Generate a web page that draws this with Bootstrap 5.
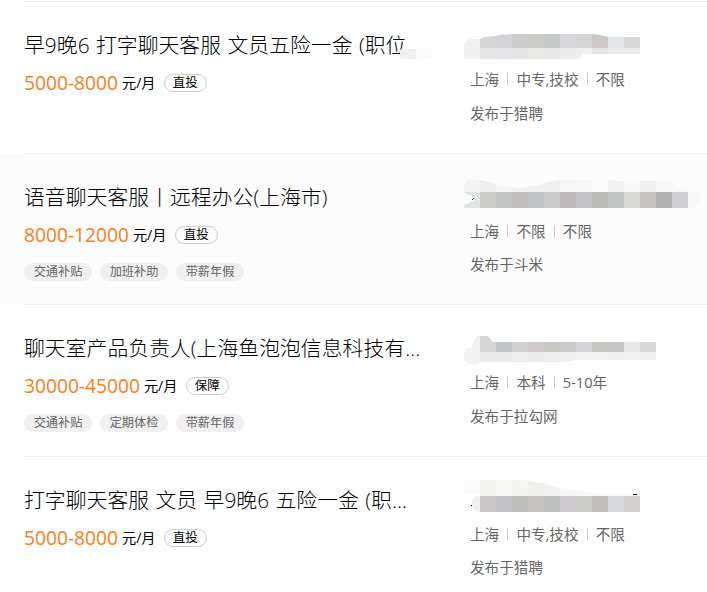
<!DOCTYPE html>
<html lang="zh-CN">
<head>
    <meta charset="utf-8">
    <meta name="viewport" content="width=device-width, initial-scale=1">
    <title>职位列表</title>
    <link rel="stylesheet" href="https://cdn.jsdelivr.net/npm/bootstrap@5.3.0/dist/css/bootstrap.min.css">
    <style>
        body
        {
            font-family: "Open Sans", "Noto Sans CJK SC", sans-serif;
            color: #000;
            background-color: #fff;
            overflow: hidden;
        }

        .job-list
        {
            padding-top: 0.3px;
        }

        .job-top
        {
            box-sizing: content-box;
            height: 0;
            margin-left: 24px;
            padding-top: 1px;
            border-bottom: 1px solid #eee;
        }

        .job-item
        {
            height: 151.5px;
            padding-left: 24px;
        }

        .job-item.active-row
        {
            background-color: #fcfcfc;
        }

        .job-inner
        {
            border-bottom: 1px solid #eee;
        }

        .job-main
        {
            width: 440px;
            padding-top: 28px;
        }

        .job-title
        {
            font-size: 20.8px;
            font-weight: 300;
            line-height: 30px;
            letter-spacing: 0.06px;
            word-spacing: 0.9px;
        }

        .title-smudge
        {
            left: 376px;
            top: 18px;
        }

        .job-pay
        {
            height: 18px;
            margin-top: 14px;
            line-height: 18px;
        }

        .pay-num
        {
            font-size: 19.2px;
            color: #ff7d18;
        }

        .pay-unit
        {
            font-size: 14.2px;
            margin-left: 4px;
        }

        .pay-pill
        {
            width: 43px;
            height: 18px;
            margin-left: 8.2px;
            border: 1px solid #ccc;
            font-size: 12.5px;
            line-height: 16px;
        }

        .job-tags
        {
            margin-top: 19px;
        }

        .job-tag
        {
            width: 68px;
            height: 18px;
            background-color: #f0f0f0;
            color: #666;
            font-size: 12.2px;
            line-height: 18px;
        }

        .job-side
        {
            padding-top: 24px;
            font-size: 14.6px;
            color: #666;
        }

        .job-side svg
        {
            overflow: visible;
        }

        .side-line
        {
            height: 18px;
            line-height: 18px;
            padding-left: 6px;
        }

        .side-meta
        {
            margin-top: 8px;
        }

        .side-from
        {
            margin-top: 15.6px;
        }

        .meta-part + .meta-part
        {
            display: flex;
            align-items: center;
        }

        .meta-part + .meta-part::before
        {
            content: "";
            width: 1px;
            height: 12px;
            margin: 0 8px 0 8.2px;
            background-color: #ccc;
        }
    </style>
</head>
<body>

    <div class="job-list">
        <div class="job-top"></div>
        <div id="jobs"></div>
    </div>

    <script src="https://cdn.jsdelivr.net/npm/bootstrap@5.3.0/dist/js/bootstrap.bundle.min.js"></script>
    <script>
        /*Job Data, company names are covered by a pixel mask*/
        const jobs = [
            {
                title: '早9晚6 打字聊天客服 文员五险一金 (职位', smudge: true,
                pay: '5000-8000', pill: '直投', tags: [],
                meta: ['上海', '中专,技校', '不限'], from: '发布于猎聘',
                mask: {
                    split: 22,
                    outline: '0,19 2,15 6,13 16,13 20,11 31,10 38,8.5 49,8 128,8 136,9 144,11 176,11 176,28 119,28 117,31 114,33 0,33',
                    upper: ['#f2f1f2', '#d6d5d4', '#d3d3d7', '#cccccd', '#cbcbc5', '#c5c9ca', '#d8d6d8', '#d4d5d3', '#cdc8c4', '#e2e6e9', '#d8d7d6'],
                    lower: ['#f0f0f0', '#e6e6e6', '#e4e5e8', '#e3e3e5', '#eaebe6', '#e8e8e8', '#ececef', '#f0f0ef', '#e7e6e4', '#eaeceb', '#edecea'],
                    marks: ''
                }
            },
            {
                title: '语音聊天客服丨远程办公(上海市)', active: true,
                pay: '8000-12000', pill: '直投', tags: ['交通补贴', '加班补助', '带薪年假'],
                meta: ['上海', '不限', '不限'], from: '发布于斗米',
                mask: {
                    split: 14,
                    outline: '0,7 2,3 6,1 16,2 25,4 31,6 56,10 75,7 88,3 96,2 148,2 151,3 210,3 212,11 224,9 224,14 235,14 235,20 238,22 229,30 0,30 0,27 9,23 15,19 5,17 0,14',
                    upper: ['#f3f3f3', '#eeedee', '#f5f7f5', '#f1f1f1', '#f1f1f1', '#efeff0', '#f5f7f6', '#f7f8f8', '#fafcfb', '#f2f2f2', '#f9f9f9', '#f0f0f0', '#f6f6f6', '#f8f8f8'],
                    lower: ['#e1e5e6', '#cdcecb', '#c1c3c3', '#c2c0b8', '#bcc3c4', '#c9c9ca', '#bdb7b9', '#c5c5c8', '#babab5', '#c2c3c3', '#dadad9', '#c7c4c2', '#b1b1b1', '#d0d0d2', '#f8f8f8'],
                    marks: '<path d="M9 20h1v1h-1v1h-1v-1h1z" fill="#345"/>'
                }
            },
            {
                title: '聊天室产品负责人(上海鱼泡泡信息科技有...',
                pay: '30000-45000', pill: '保障', tags: ['交通补贴', '定期体检', '带薪年假'],
                meta: ['上海', '本科', '5-10年'], from: '发布于拉勾网',
                mask: {
                    split: 23,
                    outline: '0,26 2,20 8,18 10,11 13,7 24,7 27,11 28,13 192,13 192,31 109,31 109,32 94,33 16,33 11,36 4,35 0,31',
                    upper: ['#f2f2f2', '#d5d4d2', '#c1c5c7', '#d2d1d3', '#cdc9cb', '#c9c9c4', '#c9c9ca', '#d3d3d7', '#c6c6c3', '#c5c7c6', '#e8e8e6', '#d7d7d7'],
                    lower: ['#f2f2f2', '#eaeaeb', '#e8ebea', '#ecedec', '#ebebec', '#eeedeb', '#f0f0f1', '#f3f3f5', '#f5f4f2', '#f0f0f2', '#f1f1f2', '#f0f0f0'],
                    marks: ''
                }
            },
            {
                title: '打字聊天客服 文员 早9晚6 五险一金 (职...',
                pay: '5000-8000', pill: '直投', tags: [],
                meta: ['上海', '中专,技校', '不限'], from: '发布于猎聘',
                mask: {
                    split: 15,
                    outline: '0,-1 60,-1 75,2 81,1 84,4 96,7 119,10 144,14 160,13 176,14 176,31 14,31 9,27 7,22 10,17 16,13 0,13',
                    upper: ['#fbfbfb', '#f4f4f3', '#f8f8f7', '#f4f4f3', '#efefec', '#f2f2f2', '#f7f7f7', '#f8f8f8', '#fafafa', '#fafafa', '#fafafa'],
                    lower: ['#f1f0f1', '#c8c6c6', '#c0c0c6', '#bdbdbc', '#c6c5bd', '#bfc1c1', '#cbc9cc', '#cacbc5', '#c1bfbb', '#d7dade', '#d3d2d1'],
                    marks: '<path d="M169 13h4v1h-4zM7 24h1v1h-1z" fill="#000"/>'
                }
            }
        ];

        /*Pixel Mask, two rows of 16px blocks inside an uneven outline*/
        function maskSvg(mask, index)
        {
            const upper = mask.upper.map((c, i) => `<rect x="${i * 16}" y="${mask.split - 16}" width="16" height="16" fill="${c}"/>`).join('');
            const lower = mask.lower.map((c, i) => `<rect x="${i * 16}" y="${mask.split}" width="16" height="16" fill="${c}"/>`).join('');
            return `
                <svg class="d-block" width="240" height="36" shape-rendering="crispEdges" aria-hidden="true">
                    <clipPath id="mask${index}"><polygon points="${mask.outline}"/></clipPath>
                    <g clip-path="url(#mask${index})">${upper}${lower}</g>
                    ${mask.marks}
                </svg>
            `;
        }

        const smudge = `
            <svg class="title-smudge position-absolute" width="32" height="12" aria-hidden="true">
                <path d="M0 2L2 1H16V11H2L0 10z" fill="#eeeff1"/>
                <path d="M16 0H32V10L30 11H16z" fill="#fbfbfb"/>
            </svg>
        `;

        function loadJobs()
        {
            document.getElementById('jobs').innerHTML = jobs.map((job, index) => `
                <div class="job-item ${job.active ? 'active-row' : ''}">
                    <div class="job-inner d-flex h-100">
                        <div class="job-main flex-shrink-0">
                            <div class="job-title position-relative text-nowrap">${job.title}${job.smudge ? smudge : ''}</div>
                            <div class="job-pay d-flex align-items-center">
                                <span class="pay-num">${job.pay}</span>
                                <span class="pay-unit">元/月</span>
                                <span class="pay-pill rounded-pill text-center">${job.pill}</span>
                            </div>
                            <div class="job-tags d-flex gap-2">
                                ${job.tags.map(tag => `<span class="job-tag rounded-pill text-center">${tag}</span>`).join('')}
                            </div>
                        </div>
                        <div class="job-side">
                            ${maskSvg(job.mask, index)}
                            <div class="side-line side-meta d-flex text-nowrap">
                                ${job.meta.map(part => `<span class="meta-part">${part}</span>`).join('')}
                            </div>
                            <div class="side-line side-from">${job.from}</div>
                        </div>
                    </div>
                </div>
            `).join('');
        }

        loadJobs();
    </script>
</body>
</html>
